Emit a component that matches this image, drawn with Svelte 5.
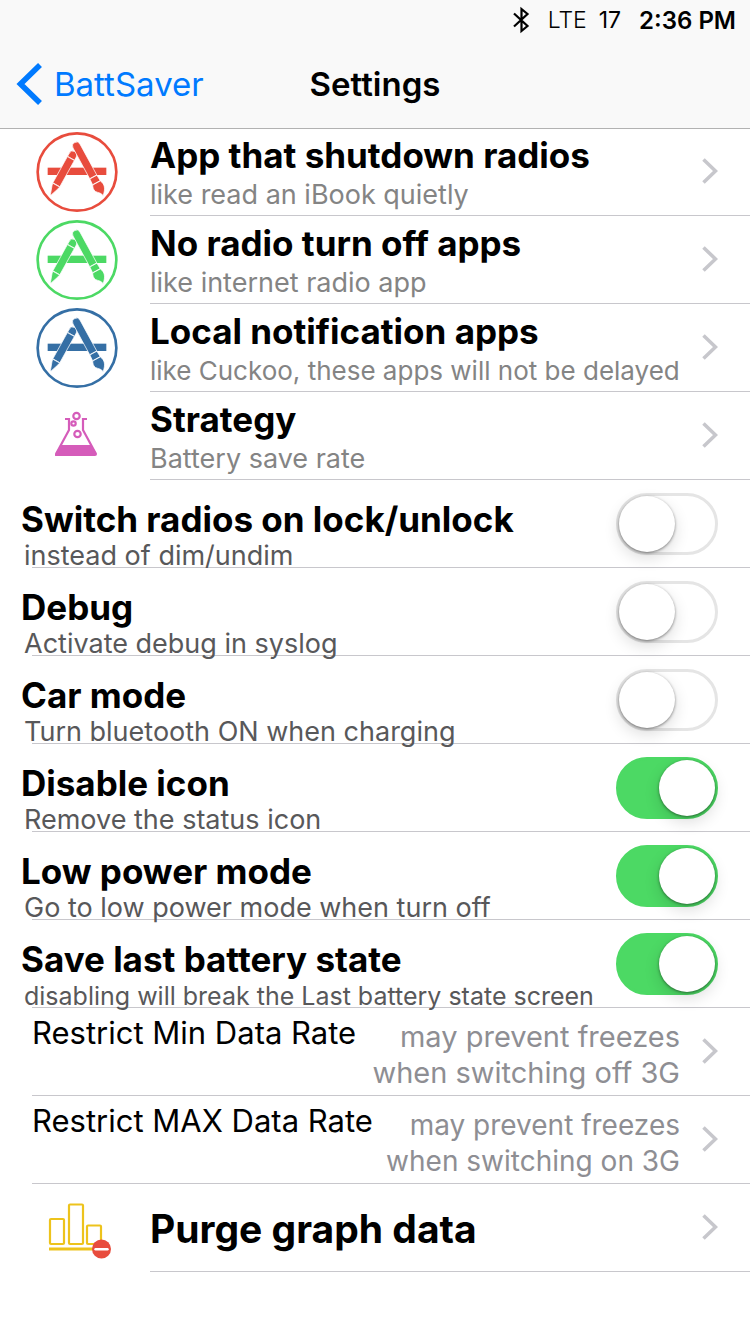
<script>
	const links = [
		{ title: 'App that shutdown radios', detail: 'like read an iBook quietly', icon: 'apps', color: '#e84c3d' },
		{ title: 'No radio turn off apps', detail: 'like internet radio app', icon: 'apps', color: '#4cd964' },
		{
			title: 'Local notification apps',
			detail: 'like Cuckoo, these apps will not be delayed',
			icon: 'apps',
			color: '#356fa5'
		},
		{ title: 'Strategy', detail: 'Battery save rate', icon: 'flask', color: '#d55cba' }
	];

	let switches = $state([
		{ id: 'lock', title: 'Switch radios on lock/unlock', detail: 'instead of dim/undim', on: false },
		{ id: 'debug', title: 'Debug', detail: 'Activate debug in syslog', on: false },
		{ id: 'car', title: 'Car mode', detail: 'Turn bluetooth ON when charging', on: false },
		{ id: 'icon', title: 'Disable icon', detail: 'Remove the status icon', on: true },
		{ id: 'power', title: 'Low power mode', detail: 'Go to low power mode when turn off', on: true },
		{
			id: 'state',
			title: 'Save last battery state',
			detail: 'disabling will break the Last battery state screen',
			on: true
		}
	]);

	const rates = [
		{ title: 'Restrict Min Data Rate', lines: ['may prevent freezes', 'when switching off 3G'] },
		{ title: 'Restrict MAX Data Rate', lines: ['may prevent freezes', 'when switching on 3G'], tight: true }
	];

	const isLong = (text) => text.length > 40;
</script>

{#snippet chevron()}
	<svg class="chevron" viewBox="0 0 16 26" aria-hidden="true">
		<path d="M1.5 1.5 L13.5 13 L1.5 24.5" fill="none" stroke="#c7c7cc" stroke-width="3.6" />
	</svg>
{/snippet}

{#snippet appsIcon(color)}
	<svg width="82" height="80" viewBox="29 18 246 240" aria-hidden="true">
		<ellipse cx="152" cy="138" rx="118" ry="116" fill="none" stroke={color} stroke-width="8" />
		<rect x="64" y="125" width="176" height="22" fill={color} />
		<g fill={color} stroke="#fff" stroke-width="2">
			<g transform="translate(139 88) rotate(29)">
				<path d="M-12 10 V-1 Q-12 -13 0 -13 Q12 -13 12 -1 V10 Z" />
				<path d="M-12 11 H12 V101 H-12 Z" />
				<path d="M-12 102 H12 L10 110 L1 136 L-1 136 L-10 110 Z" />
			</g>
			<g transform="translate(151 61) rotate(-28.5)">
				<path d="M-12 104 V-1 Q-12 -13 0 -13 Q12 -13 12 -1 V104 Z" />
				<path d="M-12 105 H12 L13 124 H-13 Z" />
				<path d="M-13 125 H13 C20 140 16 153 -1 168 C-1 157 -9 155 -15 146 C-19 138 -16 131 -13 125 Z" />
			</g>
		</g>
	</svg>
{/snippet}

{#snippet flaskIcon(color)}
	<svg class="flask" width="44" height="46" viewBox="0 0 44 46" aria-hidden="true">
		<g fill="none" stroke={color} stroke-width="2.2">
			<path d="M10 8 H14 V19 L1 43 M32 8 H28 V19 L41 43" />
			<circle cx="21.500" cy="5" r="3.200" />
			<circle cx="18.500" cy="12.500" r="2.200" />
			<circle cx="22.500" cy="23" r="3.200" />
		</g>
		<path d="M6 34 H36 L42 43 Q42 45 40 45 H1 Q-1 45 0 43 Z" fill={color} />
	</svg>
{/snippet}

<header>
	<div class="status">
		<svg width="18" height="28" viewBox="0 0 18 28" aria-label="Bluetooth">
			<path
				d="M2 7.500 L15.500 20 L9.500 25 V3 L15.500 8 L2 20.500"
				fill="none"
				stroke="#000"
				stroke-width="2.2"
			/>
		</svg>
		<span class="network">LTE</span>
		<span class="signal">17</span>
		<time>2:36 PM</time>
	</div>
	<nav>
		<a class="back" href="#home">
			<svg width="26" height="42" viewBox="0 0 26 42" aria-hidden="true">
				<path d="M24 2 L4.500 21 L24 40" fill="none" stroke="#007aff" stroke-width="5.600" />
			</svg>
			BattSaver
		</a>
		<h1>Settings</h1>
	</nav>
</header>

<main>
	{#each links as link}
		<button class="row link">
			<span class="icon">
				{#if link.icon === 'flask'}
					{@render flaskIcon(link.color)}
				{:else}
					{@render appsIcon(link.color)}
				{/if}
			</span>
			<span class="text">
				<span class="title">{link.title}</span>
				<span class="detail" class:long={isLong(link.detail)}>{link.detail}</span>
			</span>
			{@render chevron()}
		</button>
	{/each}

	{#each switches as item}
		<div class="row toggle">
			<label for={item.id}>
				<span class="title">{item.title}</span>
				<span class="detail" class:long={isLong(item.detail)}>{item.detail}</span>
			</label>
			<input id={item.id} type="checkbox" role="switch" bind:checked={item.on} />
		</div>
	{/each}

	{#each rates as rate}
		<button class="row rate">
			<span class="name">{rate.title}</span>
			<span class="value" class:tight={rate.tight}>
				{#each rate.lines as line}
					<span>{line}</span>
				{/each}
			</span>
			{@render chevron()}
		</button>
	{/each}

	<button class="row link">
		<span class="icon purge">
			<svg width="64" height="56" viewBox="0 0 64 56" aria-hidden="true">
				<g fill="none" stroke="#edc31c" stroke-width="2.2">
					<rect x="2" y="16" width="14" height="25" rx="1" />
					<rect x="21" y="1.500" width="14" height="39.500" rx="1" />
					<rect x="39" y="22.500" width="14" height="18.500" rx="1" />
					<path d="M1 46 H48" stroke-width="3" />
				</g>
				<circle cx="53.500" cy="46" r="9.500" fill="#e84c3d" />
				<path d="M47.500 46.200 H59.500" stroke="#fff" stroke-width="2.400" stroke-linecap="round" />
			</svg>
		</span>
		<span class="text">
			<span class="title big">Purge graph data</span>
		</span>
		{@render chevron()}
	</button>
</main>

<style>
	:global(body) {
		margin: 0;
		background: #fff;
		color: #000;
		font-family: Inter, 'Liberation Sans', sans-serif;
	}

	header {
		position: relative;
		background: #f9f9f9;
		box-shadow: 0 1px #b2b2b2;
	}

	.status {
		display: flex;
		align-items: center;
		justify-content: flex-end;
		height: 40px;
		padding-right: 14px;
		font-size: 24px;
	}

	.network {
		margin-left: 18px;
		font-size: 23px;
		font-weight: 300;
	}

	.signal {
		margin-left: 12px;
		font-size: 23px;
	}

	time {
		margin-left: 18px;
		font-weight: 600;
	}

	nav {
		display: grid;
		grid-template-columns: 1fr auto 1fr;
		align-items: center;
		height: 88px;
	}

	.back {
		display: flex;
		align-items: center;
		gap: 12px;
		padding-left: 16px;
		color: #007aff;
		font-size: 33px;
		text-decoration: none;
	}

	h1 {
		margin: 0;
		font-size: 33px;
		font-weight: 600;
	}

	.row {
		--inset: 32px;
		display: flex;
		box-sizing: border-box;
		width: 100%;
		min-height: 88px;
		padding: 0 32px 0 0;
		border: 0;
		/* separator sits under the text so descenders stay on top */
		background: linear-gradient(#c8c7cc, #c8c7cc) no-repeat right bottom / calc(100% - var(--inset)) 1px;
		color: inherit;
		font: inherit;
		text-align: left;
	}

	.link {
		--inset: 150px;
		align-items: center;
	}

	.icon {
		display: flex;
		flex: none;
		align-items: center;
		justify-content: center;
		width: 150px;
		box-sizing: border-box;
		padding-right: 32px;
		padding-left: 36px;
	}

	.flask {
		margin-bottom: 4px;
	}

	.icon.purge {
		padding: 6px 30px 0 40px;
	}

	.text {
		flex: 1;
		padding-top: 2px;
	}

	.title,
	.detail {
		display: block;
		white-space: nowrap;
	}

	.title {
		font-size: 35px;
		font-weight: 700;
		line-height: 44px;
	}

	.title.big {
		font-size: 39px;
	}

	.detail {
		color: #848484;
		font-size: 27px;
		line-height: 36px;
	}

	.detail.long {
		font-size: 26px;
	}

	.chevron {
		flex: none;
		width: 16px;
		height: 26px;
		margin-bottom: 2px;
	}

	.toggle {
		align-items: center;
	}

	label {
		flex: 1;
		margin-bottom: -4px;
		padding: 18px 0 0 21px;
	}

	label .title {
		line-height: 42px;
	}

	label .detail {
		padding-left: 3px;
		color: #58585a;
		line-height: 32px;
	}

	label .detail.long {
		font-size: 25px;
	}

	input {
		flex: none;
		appearance: none;
		box-sizing: border-box;
		width: 102px;
		height: 62px;
		margin: 0;
		border: 3px solid #e5e5e5;
		border-radius: 31px;
		background: #fff;
	}

	input::before {
		content: '';
		display: block;
		width: 56px;
		height: 56px;
		border-radius: 50%;
		background: #fff;
		box-shadow:
			0 1px 3px rgba(0, 0, 0, 0.45),
			0 6px 16px rgba(0, 0, 0, 0.14);
	}

	input:checked {
		border-color: #4cd964;
		background: #4cd964;
	}

	input:checked::before {
		margin-left: 40px;
	}

	.rate .name {
		flex: 1;
		padding-top: 5px;
		font-size: 31px;
		line-height: 40px;
	}

	.rate {
		padding-left: 32px;
	}

	.value {
		padding: 11px 22px 0 0;
		color: #8e8e93;
		font-size: 29px;
		line-height: 36px;
		text-align: right;
	}

	.value.tight {
		font-size: 28px;
	}

	.value span {
		display: block;
	}

	.rate .chevron {
		align-self: center;
	}
</style>
